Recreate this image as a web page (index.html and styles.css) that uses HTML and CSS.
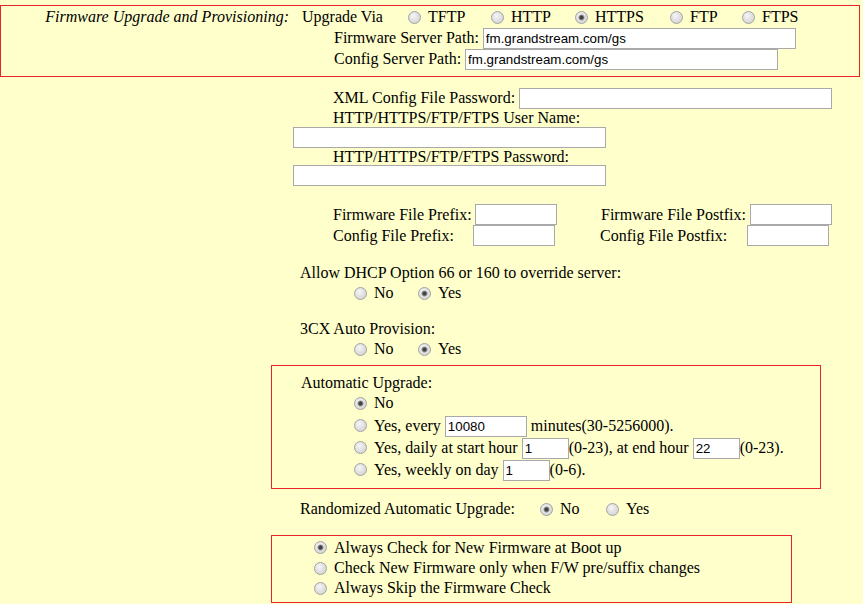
FILE: index.html
```html
<!DOCTYPE html>
<html lang="en">
<head>
  <meta charset="UTF-8" />
  <title>Maintenance - Upgrade and Provisioning</title>
  <link rel="stylesheet" href="styles.css">
</head>
<body>
  <div class="page">

    <div class="box top">
      <div class="title">Firmware Upgrade and Provisioning:</div>
      <div class="body">
        <div class="row-via">
          <span class="via-lbl">Upgrade Via</span>
          <label class="opt via-tftp"><input type="radio" name="via"> TFTP</label>
          <label class="opt via-http"><input type="radio" name="via"> HTTP</label>
          <label class="opt via-https"><input type="radio" name="via" checked> HTTPS</label>
          <label class="opt via-ftp"><input type="radio" name="via"> FTP</label>
          <label class="opt"><input type="radio" name="via"> FTPS</label>
        </div>
        <div class="row-path">Firmware Server Path: <input type="text" class="w-long" value="fm.grandstream.com/gs"></div>
        <div class="row-path">Config Server Path: <input type="text" class="w-long" value="fm.grandstream.com/gs"></div>
      </div>
    </div>

    <div class="settings">
      <div class="row-xml">XML Config File Password: <input type="password" class="w-long"></div>
      <div class="lbl-line lbl-user">HTTP/HTTPS/FTP/FTPS User Name:</div>
      <div class="field-line"><input type="text" class="w-long"></div>
      <div class="lbl-line lbl-pass">HTTP/HTTPS/FTP/FTPS Password:</div>
      <div class="field-line"><input type="password" class="w-long"></div>

      <div class="fix-row fix-fw">
        <span>Firmware File Prefix:</span><input type="text" class="w-short">
        <span class="gap"></span>
        <span>Firmware File Postfix:</span><input type="text" class="w-short">
      </div>
      <div class="fix-row fix-cfg">
        <span>Config File Prefix:</span><input type="text" class="w-short">
        <span class="gap"></span>
        <span>Config File Postfix:</span><input type="text" class="w-short">
      </div>

      <div class="txt dhcp">Allow DHCP Option 66 or 160 to override server:</div>
      <div class="choices">
        <label class="opt choice"><input type="radio" name="dhcp"> No</label>
        <label class="opt"><input type="radio" name="dhcp" checked> Yes</label>
      </div>

      <div class="txt cx">3CX Auto Provision:</div>
      <div class="choices">
        <label class="opt choice"><input type="radio" name="cx"> No</label>
        <label class="opt"><input type="radio" name="cx" checked> Yes</label>
      </div>

      <div class="box auto">
        <div class="txt">Automatic Upgrade:</div>
        <div class="auto-row"><label class="opt"><input type="radio" name="auto" checked> No</label></div>
        <div class="in-row first">
          <input type="radio" name="auto">Yes, every <input type="text" class="w-short" value="10080"> minutes(30-5256000).
        </div>
        <div class="in-row">
          <input type="radio" name="auto">Yes, daily at start hour <input type="text" class="w-tiny" value="1">(0-23), at end hour <input type="text" class="w-tiny" value="22">(0-23).
        </div>
        <div class="in-row">
          <input type="radio" name="auto">Yes, weekly on day <input type="text" class="w-tiny" value="1">(0-6).
        </div>
      </div>

      <div class="txt random">
        <span class="random-lbl">Randomized Automatic Upgrade:</span>
        <label class="opt choice-r"><input type="radio" name="rnd" checked> No</label>
        <label class="opt"><input type="radio" name="rnd"> Yes</label>
      </div>

      <div class="box boot">
        <div class="boot-row"><label class="opt"><input type="radio" name="boot" checked> Always Check for New Firmware at Boot up</label></div>
        <div class="boot-row"><label class="opt"><input type="radio" name="boot"> Check New Firmware only when F/W pre/suffix changes</label></div>
        <div class="boot-row"><label class="opt"><input type="radio" name="boot"> Always Skip the Firmware Check</label></div>
      </div>
    </div>

  </div>
</body>
</html>
```
FILE: styles.css
```css
body {
  margin: 0;
  background: #ffffcc;
  color: #000;
  font-family: "Liberation Serif", "Times New Roman", serif;
  font-size: 16px;
}

.page {
  padding-top: 5px;
}

.box {
  border: 1px solid #e8232a;
  box-sizing: border-box;
}

input[type="text"],
input[type="password"] {
  height: 21px;
  box-sizing: border-box;
  margin: 0;
  padding: 1px 2px;
  border: 1px solid #a9a9a9;
  background: #fff;
  font-family: "Liberation Sans", Arial, sans-serif;
  font-size: 13.33px;
  color: #000;
}

.w-long { width: 313px; }
.w-short { width: 82px; }
.w-tiny { width: 47px; }

input[type="radio"] {
  appearance: none;
  -webkit-appearance: none;
  width: 13px;
  height: 13px;
  margin: 0 7px 0 0;
  border: 1px solid #a2a2a2;
  border-radius: 50%;
  box-sizing: border-box;
  background: radial-gradient(circle at 40% 35%, #f6f6f6 0, #e2e2e2 45%, #cfcfcf 100%);
  flex: none;
}

input[type="radio"]:checked {
  background: radial-gradient(circle, #3c3c3c 0, #4a4a4a 1.6px, #9a9a9a 2.6px, transparent 3.4px),
              radial-gradient(circle at 40% 35%, #f6f6f6 0, #e2e2e2 45%, #cfcfcf 100%);
}

.opt {
  display: inline-flex;
  align-items: center;
  white-space: nowrap;
}

/* top section */
.top {
  width: 860px;
  display: flex;
  padding: 1px 0 7px;
}

.title {
  width: 288px;
  text-align: right;
  font-style: italic;
  line-height: 20px;
  flex: none;
}

.body {
  padding-left: 13px;
}

.row-via {
  height: 20px;
  display: flex;
  align-items: center;
}

.via-lbl { width: 106px; }
.via-tftp { width: 83px; }
.via-http { width: 84px; }
.via-https { width: 95px; }
.via-ftp { width: 72px; }

.row-path {
  height: 21px;
  line-height: 21px;
  padding-left: 32px;
}

/* lower section */
.settings {
  padding-left: 271px;
}

.row-xml {
  margin-top: 10px;
  height: 21px;
  line-height: 21px;
  padding-left: 62px;
}

.lbl-line {
  padding-left: 62px;
  line-height: 18px;
}

.lbl-user { height: 19px; line-height: 20px; }
.lbl-pass { height: 17px; }

.field-line {
  height: 21px;
  padding-left: 22px;
}

.fix-row {
  display: grid;
  height: 21px;
  line-height: 21px;
  padding-left: 62px;
}

.fix-fw {
  margin-top: 18px;
  grid-template-columns: 142px 82px 44px 149px 82px;
}

.fix-cfg {
  grid-template-columns: 140px 82px 45px 147px 82px;
}

.txt {
  padding-left: 29px;
  height: 20px;
  line-height: 20px;
}

.dhcp { margin-top: 17px; }
.cx { margin-top: 16px; }

.choices {
  height: 20px;
  display: flex;
  align-items: center;
  padding-left: 83px;
}

.choice { width: 64px; }

.auto {
  width: 550px;
  margin-top: 6px;
  padding: 7px 0 8px;
}

.auto-row {
  height: 20px;
  display: flex;
  align-items: center;
  padding-left: 82px;
}

.in-row {
  height: 21px;
  line-height: 21px;
  margin-top: 1px;
  padding-left: 82px;
  white-space: nowrap;
}

.in-row.first { margin-top: 2px; }

.in-row input[type="radio"] {
  vertical-align: -1px;
}

.random {
  margin-top: 10px;
  display: flex;
  align-items: center;
}

.random-lbl { width: 240px; }
.choice-r { width: 66px; }

.boot {
  width: 521px;
  margin-top: 16px;
  padding: 1px 0 4px;
}

.boot-row {
  height: 20px;
  display: flex;
  align-items: center;
  padding-left: 42px;
}

.boot-row:first-child {
  height: 21px;
}
```
